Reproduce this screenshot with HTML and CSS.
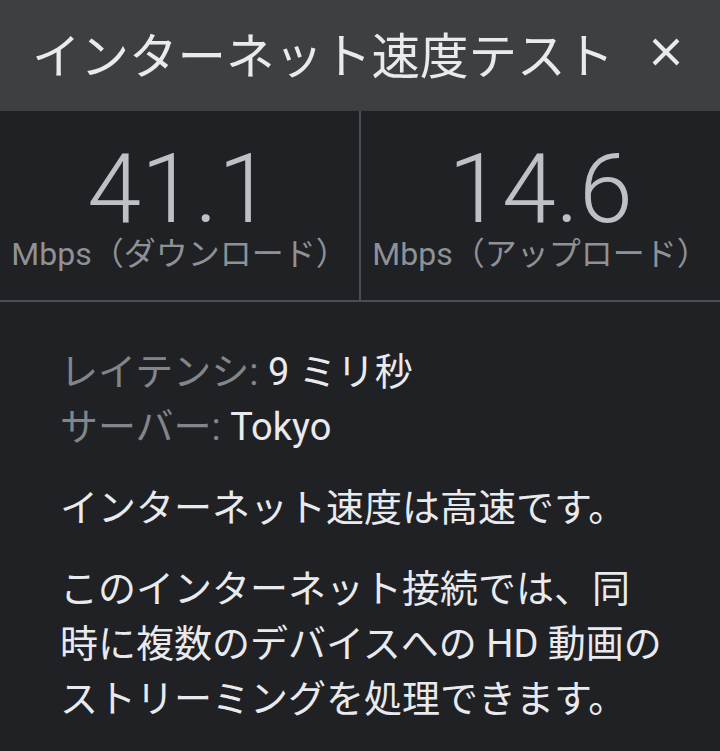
FILE: index.html
```html
<!DOCTYPE html>
<html lang="ja">
<head>
<meta charset="utf-8">
<title>インターネット速度テスト</title>
<link rel="stylesheet" href="styles.css">
</head>
<body>
<div class="dialog">
  <header class="header">
    <h1 class="title">インターネット速度テスト</h1>
    <svg class="close" width="28" height="28" viewBox="0 0 28 28" aria-label="閉じる">
      <path d="M2 2 L26 26 M26 2 L2 26" stroke="#e8eaed" stroke-width="4" fill="none"/>
    </svg>
  </header>
  <section class="stats">
    <div class="stat">
      <div class="value">41.1</div>
      <div class="unit">Mbps（ダウンロード）</div>
    </div>
    <div class="stat">
      <div class="value">14.6</div>
      <div class="unit">Mbps（アップロード）</div>
    </div>
  </section>
  <section class="info">
    <div class="meta">
      <div class="meta-row"><span class="meta-label">レイテンシ:</span> <span class="meta-value">9 ミリ秒</span></div>
      <div class="meta-row"><span class="meta-label">サーバー:</span> <span class="meta-value">Tokyo</span></div>
    </div>
    <p class="para">インターネット速度は高速です。</p>
    <p class="para">このインターネット接続では、同時に複数のデバイスへの HD 動画のストリーミングを処理できます。</p>
  </section>
</div>
</body>
</html>
```

FILE: styles.css
```css
html, body {
  margin: 0;
  padding: 0;
  background: #202124;
}
body {
  font-family: Roboto, "Noto Sans CJK JP", sans-serif;
  color: #e8eaed;
  width: 720px;
  height: 751px;
  overflow: hidden;
}
.header {
  background: #3c4043;
  height: 111px;
  display: flex;
  align-items: flex-start;
  padding: 0 40px 0 32px;
  box-sizing: border-box;
}
.title {
  flex: 1;
  margin: 0;
  padding-top: 5px;
  font-weight: 400;
  font-size: 48.5px;
  line-height: 106px;
  color: #e8eaed;
  white-space: nowrap;
}
.close {
  margin-top: 38px;
  flex: none;
}
.stats {
  display: grid;
  grid-template-columns: 359px 1fr;
  border-bottom: 2px solid #4a4d51;
  height: 191px;
  box-sizing: border-box;
}
.stat {
  padding-top: 33px;
  text-align: center;
}
.stat + .stat {
  border-left: 2px solid #4a4d51;
}
.value {
  font-size: 97px;
  font-weight: 300;
  line-height: 90px;
  color: #bdc1c6;
}
.unit {
  font-size: 32px;
  line-height: 40px;
  color: #8e9296;
  white-space: nowrap;
}
.info {
  padding: 43px 55px 0 60px;
}
.meta-row {
  font-size: 38px;
  line-height: 55px;
}
.meta-label {
  color: #80868b;
}
.meta-value {
  color: #e8eaed;
}
.para {
  margin: 26px 0 0;
  font-size: 38px;
  line-height: 55px;
  color: #e8eaed;
}
```
